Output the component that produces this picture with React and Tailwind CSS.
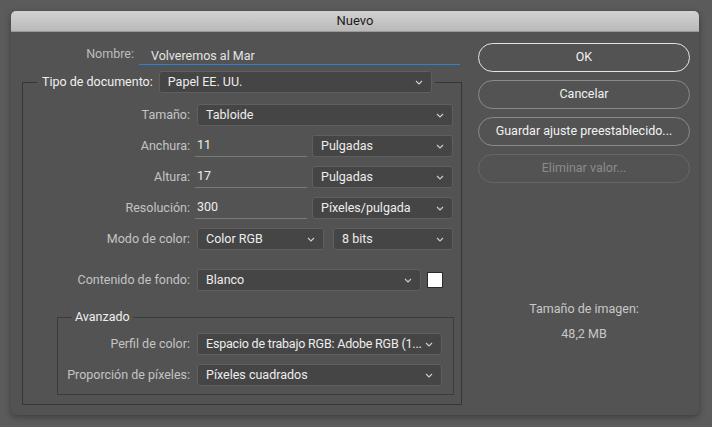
import React from "react";

const Chevron = () => (
  <svg width="8" height="5" viewBox="0 0 8 5" className="shrink-0">
    <path d="M1 1 L4 4 L7 1" fill="none" stroke="#cfcfcf" strokeWidth="1.1" />
  </svg>
);

const Select = ({ value, className = "", textClass = "" }) => (
  <div
    className={`h-[22px] flex items-center justify-between pl-[8px] pr-[8px] bg-[#454545] border border-[#5f5f5f] rounded-[3px] text-[#ededed] ${className}`}
  >
    <span className={`whitespace-nowrap ${textClass}`}>{value}</span>
    <Chevron />
  </div>
);

const Field = ({ value }) => (
  <div className="ml-[5px] w-[112px] h-[22px] flex items-center pl-[2px] border-b border-[#7a7a7a] text-[#ededed]">
    {value}
  </div>
);

const Label = ({ children, w = "w-[167px]" }) => (
  <div className={`${w} shrink-0 text-right text-[#c4c4c4]`}>{children}</div>
);

const Button = ({ children, variant }) => {
  const styles = {
    ok: "border-[#e4e4e4] text-[#f2f2f2]",
    normal: "border-[#8a8a8a] text-[#f2f2f2]",
    disabled: "border-[#676767] text-[#8c8c8c]",
  };
  return (
    <div
      className={`h-[29px] w-[212px] flex items-center justify-center rounded-full border ${styles[variant]}`}
    >
      {children}
    </div>
  );
};

export default function App() {
  return (
    <div
      className="w-[712px] h-[427px] bg-[#5b5b5b] pt-[11px] pl-[11px] text-[12.5px]"
      style={{ fontFamily: 'Roboto, "Liberation Sans", Arial, sans-serif' }}
    >
      <div className="w-[688px] h-[404px] rounded-[5px] overflow-hidden bg-[#535353] shadow-[0_2px_6px_rgba(0,0,0,0.35)] flex flex-col">
        {/* title bar */}
        <div className="h-[21px] shrink-0 flex items-center justify-center bg-gradient-to-b from-[#d2d2d2] to-[#b9b9b9] border-b border-[#9a9a9a] text-[13px] text-[#1c1c1c]">
          Nuevo
        </div>

        <div className="flex flex-1">
          {/* left column */}
          <div className="w-[467px] pl-[11px] flex flex-col">
            <div className="mt-[15px] flex items-end h-[18px]">
              <div className="w-[112px] text-right text-[#bdbdbd] pb-[1px]">Nombre:</div>
              <div className="ml-[5px] w-[321px] h-[18px] pl-[12px] border-b border-[#2f7fd8] text-[#e4e4e4] leading-[17px]">
                Volveremos al Mar
              </div>
            </div>

            <fieldset className="mt-[6px] w-[439px] h-[334px] border border-[#363636] pb-[9px] pr-[7px]">
              <legend className="ml-[14px] pl-[5px] pr-[3px]">
                <div className="flex items-center">
                  <span className="text-[#f0f0f0]">Tipo de documento:</span>
                  <Select value="Papel EE. UU." className="ml-[6px] w-[273px] h-[21px] pl-[7px]" />
                </div>
              </legend>

              <div className="mt-[11px] flex flex-col gap-[9px]">
                <div className="flex items-center">
                  <Label>Tamaño:</Label>
                  <Select value="Tabloide" className="ml-[7px] w-[256px]" />
                </div>
                <div className="flex items-center">
                  <Label>Anchura:</Label>
                  <Field value="11" />
                  <Select value="Pulgadas" className="ml-[5px] w-[141px]" />
                </div>
                <div className="flex items-center">
                  <Label>Altura:</Label>
                  <Field value="17" />
                  <Select value="Pulgadas" className="ml-[5px] w-[141px]" />
                </div>
                <div className="flex items-center">
                  <Label>Resolución:</Label>
                  <Field value="300" />
                  <Select value="Píxeles/pulgada" className="ml-[5px] w-[141px]" />
                </div>
                <div className="flex items-center">
                  <Label>Modo de color:</Label>
                  <Select value="Color RGB" className="ml-[7px] w-[127px]" />
                  <Select value="8 bits" className="ml-[9px] w-[120px]" />
                </div>
                <div className="flex items-center mt-[10px]">
                  <Label>Contenido de fondo:</Label>
                  <Select value="Blanco" className="ml-[7px] w-[224px]" />
                  <div className="ml-[6px] w-[16px] h-[16px] bg-white border border-[#2a2a2a]" />
                </div>
              </div>

              <fieldset className="mt-[18px] ml-[34px] w-[397px] border border-[#3c3c3c] pb-[8px]">
                <legend className="ml-[14px] px-[3px] text-[#efefef] leading-[16px]">Avanzado</legend>
                <div className="mt-[8px] flex flex-col gap-[9px]">
                  <div className="flex items-center">
                    <Label w="w-[132px]">Perfil de color:</Label>
                    <Select
                      value="Espacio de trabajo RGB: Adobe RGB (1..."
                      className="ml-[7px] w-[245px] pl-[7px] pr-[5px]"
                      textClass="tracking-[-0.2px]"
                    />
                  </div>
                  <div className="flex items-center">
                    <Label w="w-[132px]">Proporción de píxeles:</Label>
                    <Select value="Píxeles cuadrados" className="ml-[7px] w-[245px]" />
                  </div>
                </div>
              </fieldset>
            </fieldset>
          </div>

          {/* right column */}
          <div className="flex flex-col pt-[11px]">
            <div className="flex flex-col gap-[8px]">
              <Button variant="ok">OK</Button>
              <Button variant="normal">Cancelar</Button>
              <Button variant="normal">Guardar ajuste preestablecido...</Button>
              <Button variant="disabled">Eliminar valor...</Button>
            </div>
            <div className="mt-[117px] w-[212px] flex flex-col items-center text-[#c8c8c8]">
              <div>Tamaño de imagen:</div>
              <div className="mt-[6px]">48,2 MB</div>
            </div>
          </div>
        </div>
      </div>
    </div>
  );
}
